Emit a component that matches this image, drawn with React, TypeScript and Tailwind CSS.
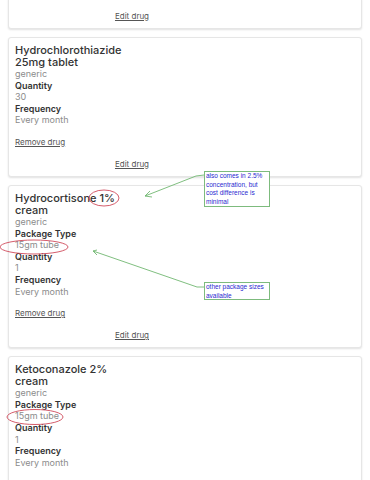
import React from 'react';

type Drug = {
  name: [string, string];
  packageType?: string;
  quantity: string;
  frequency: string;
};

const drugs: Drug[] = [
  { name: ['Hydrochlorothiazide', '25mg tablet'], quantity: '30', frequency: 'Every month' },
  { name: ['Hydrocortisone 1%', 'cream'], packageType: '15gm tube', quantity: '1', frequency: 'Every month' },
  { name: ['Ketoconazole 2%', 'cream'], packageType: '15gm tube', quantity: '1', frequency: 'Every month' },
];

const Label = ({ children }: { children: React.ReactNode }) => (
  <div className="text-[9px] leading-[11.6px] font-semibold text-[#333]">{children}</div>
);

const Value = ({ children }: { children: React.ReactNode }) => (
  <div className="text-[9px] leading-[11.6px] text-[#8c8c8c]">{children}</div>
);

const EditLink = () => (
  <div className="w-[234px] text-center text-[8px] leading-[12px] text-[#555]">
    <a href="#" className="underline">Edit drug</a>
  </div>
);

const DrugCard = ({ drug }: { drug: Drug }) => (
  <div className="bg-white border border-[#e6e6e6] rounded-[3px] shadow-[0_1px_2px_rgba(0,0,0,0.12)] px-[6px] pt-[6px] pb-[6px]">
    <div className="text-[11px] leading-[12px] font-medium text-[#333]">
      {drug.name[0]}
      <br />
      {drug.name[1]}
    </div>
    <Value>generic</Value>
    {drug.packageType && (
      <>
        <Label>Package Type</Label>
        <Value>{drug.packageType}</Value>
      </>
    )}
    <Label>Quantity</Label>
    <Value>{drug.quantity}</Value>
    <Label>Frequency</Label>
    <Value>{drug.frequency}</Value>
    <div className="mt-[10px] text-[8px] leading-[12px] text-[#555]">
      <a href="#" className="underline">Remove drug</a>
    </div>
    <div className="mt-[10px]">
      <EditLink />
    </div>
  </div>
);

const Note = ({ className, children }: { className: string; children: React.ReactNode }) => (
  <div
    className={`absolute bg-white border border-[#7dbb7d] px-[1px] text-[6.5px] leading-[8.6px] text-[#2a2ad0] ${className}`}
    style={{ fontFamily: '"Liberation Sans", Arial, sans-serif' }}
  >
    {children}
  </div>
);

export default function App() {
  return (
    <div
      className="relative w-[370px] h-[480px] overflow-hidden bg-white"
      style={{ fontFamily: 'Inter, "Noto Sans", sans-serif' }}
    >
      <div className="flex flex-col gap-[8px] px-[8px]">
        {/* top card, scrolled past */}
        <div className="-mt-[4px] bg-white border border-[#e6e6e6] rounded-[3px] shadow-[0_1px_2px_rgba(0,0,0,0.12)] px-[6px] pt-[13px] pb-[6px]">
          <EditLink />
        </div>
        {drugs.map((d) => (
          <DrugCard key={d.name[0]} drug={d} />
        ))}
      </div>

      {/* annotations */}
      <svg className="absolute inset-0 pointer-events-none" width="370" height="480" viewBox="0 0 370 480">
        <g fill="none" stroke="#72b872" strokeWidth="0.9">
          <polyline points="204,175 196,176 145,196" />
          <polyline points="150,191 145,196 152,197" />
          <polyline points="204,287 197,287 93,251" />
          <polyline points="97,250 93,251 97,255" />
        </g>
        <g fill="none" stroke="#cf4a5a" strokeWidth="0.9">
          <ellipse cx="104" cy="198" rx="15" ry="8" />
          <ellipse cx="34" cy="247" rx="34" ry="7" />
          <ellipse cx="35" cy="417" rx="28" ry="7.5" />
        </g>
      </svg>
      <Note className="left-[204px] top-[171px] w-[66px] h-[36px]">
        also comes in 2.5%
        <br />
        concentration, but
        <br />
        cost difference is
        <br />
        minimal
      </Note>
      <Note className="left-[204px] top-[282px] w-[66px] h-[18px]">
        other package sizes
        <br />
        available
      </Note>
    </div>
  );
}
